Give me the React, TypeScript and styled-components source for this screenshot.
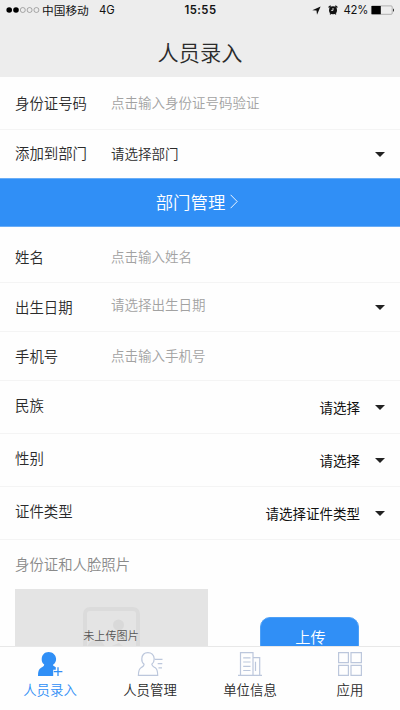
import React from "react";
import styled, { createGlobalStyle } from "styled-components";

const GlobalStyle = createGlobalStyle`
  * { box-sizing: border-box; }
  body {
    margin: 0;
    overflow: hidden;
    background: #fefefe;
    font-family: "Noto Sans CJK SC", "Liberation Sans", sans-serif;
    font-weight: 350;
    color: #2b2b2b;
  }
`;

const Screen = styled.div`
  display: flex;
  flex-direction: column;
  width: 400px;
  height: 710px;
  overflow: hidden;
`;

const Header = styled.header`
  flex: none;
  height: 77px;
  background: #ededed;
`;

const StatusBar = styled.div`
  display: grid;
  grid-template-columns: 1fr auto 1fr;
  align-items: center;
  height: 20px;
  padding: 0 6px 0 6px;
  font-size: 11px;
  font-weight: 400;
  line-height: 20px;
  color: #111;
`;

const StatusGroup = styled.div<{ $end?: boolean }>`
  display: flex;
  align-items: center;
  justify-content: ${(p) => (p.$end ? "flex-end" : "flex-start")};
`;

const Signal = styled.svg`
  display: block;
  width: 35px;
  height: 8px;
  margin-right: 1px;
`;

const Carrier = styled.span`
  width: 57px;
  font-size: 11.7px;
  white-space: nowrap;
`;

const Latin = styled.span`
  font-family: Inter, "Liberation Sans", sans-serif;
  font-size: 11.3px;
`;

const Percent = styled(Latin)`
  letter-spacing: -0.3px;
  margin-right: 1px;
`;

const Clock = styled(Latin)`
  margin-left: 1px;
  font-weight: 600;
  letter-spacing: 0.5px;
`;

const Glyph = styled.svg<{ $gap: number }>`
  display: block;
  flex: none;
  margin-right: ${(p) => p.$gap}px;
`;

const Title = styled.h1`
  margin: 0;
  height: 57px;
  line-height: 63px;
  text-align: center;
  font-size: 21.2px;
  font-weight: 350;
  color: #2b2b2b;
`;

const Content = styled.main`
  flex: 1;
  min-height: 0;
  overflow: hidden;
`;

const Row = styled.div<{ $height: number; $last?: boolean }>`
  display: flex;
  align-items: center;
  height: ${(p) => p.$height}px;
  padding: 0 15px 0 15px;
  border-bottom: ${(p) => (p.$last ? "0" : "1px solid #f4f4f4")};
`;

const Label = styled.span<{ $shift?: number }>`
  flex: none;
  width: 96px;
  font-size: 14.4px;
  line-height: 22px;
  margin-bottom: ${(p) => p.$shift ?? 0}px;
`;

const Value = styled.span<{ $tone: "hint" | "dark" | "black"; $end?: boolean; $shift?: number }>`
  flex: 1;
  font-size: 13.5px;
  font-weight: ${(p) => (p.$tone === "black" ? 400 : 350)};
  line-height: 20px;
  text-align: ${(p) => (p.$end ? "right" : "left")};
  padding-right: ${(p) => (p.$end ? 15 : 0)}px;
  margin-bottom: ${(p) => p.$shift ?? 0}px;
  color: ${(p) => ({ hint: "#a2a2a2", dark: "#2b2b2b", black: "#111" })[p.$tone]};
`;

const Caret = styled.i`
  flex: none;
  margin-top: 1px;
  border: 5px solid transparent;
  border-top-color: #222;
  border-bottom: 0;
`;

const Banner = styled.div`
  display: flex;
  align-items: center;
  justify-content: center;
  gap: 5px;
  height: 49px;
  padding: 0 6px 2px 0;
  font-size: 17.4px;
  line-height: 26px;
  color: #fff;
  background: #308ff6;
  border-top: 1px solid #69adf7;
  border-bottom: 1px solid #69adf7;
`;

const SectionTitle = styled.div`
  height: 49px;
  padding-left: 15px;
  font-size: 14.4px;
  line-height: 47px;
  color: #8a8a8a;
`;

const UploadArea = styled.div`
  display: flex;
  align-items: flex-start;
  gap: 52px;
  padding-left: 15px;
`;

const Preview = styled.div`
  display: grid;
  justify-items: center;
  width: 193px;
  height: 110px;
  background: #e4e4e4;
`;

const PreviewIcon = styled.svg`
  grid-area: 1 / 1;
  margin-top: 18px;
`;

const PreviewText = styled.span`
  grid-area: 1 / 1;
  margin-top: 38px;
  margin-right: 1px;
  font-size: 11.1px;
  line-height: 16px;
  color: #555;
`;

const UploadButton = styled.button`
  width: 99px;
  height: 38px;
  margin-top: 28px;
  padding: 0 0 1px 2px;
  border: 1px solid #4da0f7;
  border-radius: 10px;
  background: #308ff6;
  color: #fff;
  font-family: inherit;
  font-weight: 350;
  font-size: 15.2px;
`;

const TabBar = styled.nav`
  flex: none;
  display: grid;
  grid-template-columns: repeat(4, 1fr);
  height: 64px;
  border-top: 1px solid #e8e8e8;
  background: #fefefe;
`;

const Tab = styled.div<{ $active?: boolean }>`
  display: flex;
  flex-direction: column;
  align-items: center;
  padding-top: 4px;
  font-size: 13.4px;
  line-height: 20px;
  color: ${(p) => (p.$active ? "#308ff6" : "#2b2b2b")};
`;

const TabIcon = styled.svg`
  display: block;
  width: 26px;
  height: 26px;
  margin-bottom: 2px;
  fill: none;
  stroke: #bcc7dc;
  stroke-width: 1.2;
`;

const personPath =
  "M7.1 13.3C5.5 12 4.6 10 4.8 7.8 5 4 7.5 1.6 10.9 1.6S17 4 17.2 7.8C17.3 10 16.3 12 14.8 13.3 15 15.1 16.4 15.6 18 16.6 20.2 18 20.7 20.6 20.7 24.4H1.4C1.4 20.6 2 18 4.3 16.6 6 15.6 7.1 15.1 7.1 13.3Z";

const personSolidPath =
  "M7.2 13.5C5.4 12.2 4.6 10.2 4.7 7.9 4.9 3.8 7.6 1 11.6 1S18.9 3.8 19.1 7.9C19.2 10.3 17.9 12.4 16 13.7L16.1 14.6 18.8 16.2V18.8H16.2V25H1C1 20.8 1.6 18.2 4.1 16.8 6.1 15.7 7.2 15.2 7.2 13.5Z";

type Field = {
  label: string;
  value: string;
  tone: "hint" | "dark" | "black";
  height: number;
  caret?: boolean;
  end?: boolean;
  last?: boolean;
  labelShift?: number;
  valueShift?: number;
};

const topFields: Field[] = [
  { label: "身份证号码", value: "点击输入身份证号码验证", tone: "hint", height: 53, labelShift: 0, valueShift: 2 },
  { label: "添加到部门", value: "请选择部门", tone: "dark", height: 48, caret: true, last: true, labelShift: 3, valueShift: 3 },
];

const personFields: Field[] = [
  { label: "姓名", value: "点击输入姓名", tone: "hint", height: 56, labelShift: -4, valueShift: -2 },
  { label: "出生日期", value: "请选择出生日期", tone: "hint", height: 49, caret: true, labelShift: 0, valueShift: 7 },
  { label: "手机号", value: "点击输入手机号", tone: "hint", height: 49, labelShift: 0, valueShift: 3 },
  { label: "民族", value: "请选择", tone: "black", height: 53, caret: true, end: true, labelShift: 5, valueShift: 1 },
  { label: "性别", value: "请选择", tone: "black", height: 53, caret: true, end: true, labelShift: 5, valueShift: 1 },
  { label: "证件类型", value: "请选择证件类型", tone: "black", height: 53, caret: true, end: true, labelShift: 5, valueShift: 1 },
];

function FieldRow({ field }: { field: Field }) {
  return (
    <Row $height={field.height} $last={field.last}>
      <Label $shift={field.labelShift}>{field.label}</Label>
      <Value $tone={field.tone} $end={field.end} $shift={field.valueShift}>
        {field.value}
      </Value>
      {field.caret && <Caret />}
    </Row>
  );
}

export default function App() {
  return (
    <Screen>
      <GlobalStyle />
      <Header>
        <StatusBar>
          <StatusGroup>
            <Signal viewBox="0 0 35 8">
              {[0, 1, 2, 3, 4].map((i) => (
                <circle
                  key={i}
                  cx={3.2 + i * 6.8}
                  cy="4"
                  r={i < 2 ? 2.8 : 2.5}
                  fill={i < 2 ? "#000" : "none"}
                  stroke={i < 2 ? "none" : "#777"}
                  strokeWidth="0.6"
                />
              ))}
            </Signal>
            <Carrier>中国移动</Carrier>
            <Latin>4G</Latin>
          </StatusGroup>
          <Clock>15:55</Clock>
          <StatusGroup $end>
            <Glyph $gap={7} width="9" height="9" viewBox="0 0 9 9">
              <path d="M8.6.4 5 8.8 4.5 4.6.3 4.2Z" fill="#111" />
            </Glyph>
            <Glyph $gap={6} width="10" height="10" viewBox="0 0 10 10">
              <circle cx="5" cy="5.3" r="4" fill="#111" />
              <path d="M.6 2.6 2.7.8M9.4 2.6 7.3.8M2 9.4 3 8.4M8 9.4 7 8.4" stroke="#111" strokeWidth="1.3" />
              <path d="M5 3v2.4H3.2" fill="none" stroke="#ededed" strokeWidth=".9" />
            </Glyph>
            <Percent>42%</Percent>
            <Glyph $gap={-1} width="26" height="10" viewBox="0 0 26 10">
              <rect x="2.4" y=".9" width="20.8" height="8.4" rx="1" fill="none" stroke="#888" strokeWidth=".6" />
              <rect x="2.5" y="1" width="9.3" height="8.2" fill="#000" />
              <path d="M24 3.5c1.3.2 1.3 3 0 3.2Z" fill="#222" />
            </Glyph>
          </StatusGroup>
        </StatusBar>
        <Title>人员录入</Title>
      </Header>
      <Content>
        {topFields.map((f) => (
          <FieldRow key={f.label} field={f} />
        ))}
        <Banner>
          部门管理
          <svg width="8" height="15" viewBox="0 0 8 15">
            <path d="M.6.8 7.2 7.5.6 14.2" fill="none" stroke="#fff" strokeWidth=".9" />
          </svg>
        </Banner>
        {personFields.map((f) => (
          <FieldRow key={f.label} field={f} />
        ))}
        <SectionTitle>身份证和人脸照片</SectionTitle>
        <UploadArea>
          <Preview>
            <PreviewIcon width="57" height="57" viewBox="0 0 57 57">
              <rect x="2" y="2" width="53" height="53" rx="5" fill="none" stroke="#dbdbdb" strokeWidth="4" />
              <circle cx="35.5" cy="18" r="5.5" fill="#d9d9d9" />
              <path d="M3 42C6 35 9 33 14 33S21 37 23 42L31 38 36 36 44 42 54 50V54H3Z" fill="#dbdbdb" />
            </PreviewIcon>
            <PreviewText>未上传图片</PreviewText>
          </Preview>
          <UploadButton>上传</UploadButton>
        </UploadArea>
      </Content>
      <TabBar>
        <Tab $active>
          <TabIcon viewBox="0 0 26 26">
            <path d={personSolidPath} fill="#308ff6" stroke="none" />
            <path d="M21 16.3V25M16.8 20.7H25.4" stroke="#308ff6" strokeWidth="1.3" />
          </TabIcon>
          人员录入
        </Tab>
        <Tab>
          <TabIcon viewBox="0 0 26 26">
            <path d={personPath} />
            <path d="M17.8 8.4H25.5M20.7 12.7H25.3M21.5 16.8H25" />
          </TabIcon>
          人员管理
        </Tab>
        <Tab>
          <TabIcon viewBox="0 0 26 26">
            <path d="M1 24.4H25M3.5 24V1.6H16V24M16 6.6H22.7V24M6.2 6.8H13.5M6.2 11H13.5M6.2 15.3H13.5M6.2 19.5H13.5M18.5 10.8V20" />
          </TabIcon>
          单位信息
        </Tab>
        <Tab>
          <TabIcon viewBox="0 0 26 26">
            <path d="M1.6 1.6H11.4V11.6H1.6ZM14 1.6H24.4V11.6H14ZM1.6 14.3H11.4V24.4H1.6ZM14 14.3H24.4V24.4H14Z" />
          </TabIcon>
          应用
        </Tab>
      </TabBar>
    </Screen>
  );
}
